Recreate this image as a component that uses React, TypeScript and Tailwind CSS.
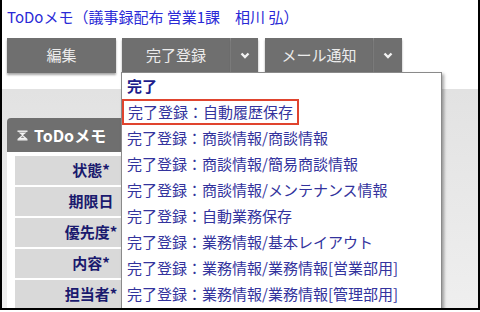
import React from 'react';

const labels = ['状態*', '期限日', '優先度*', '内容*', '担当者*'];

const items = [
  '完了登録：商談情報/商談情報',
  '完了登録：商談情報/簡易商談情報',
  '完了登録：商談情報/メンテナンス情報',
  '完了登録：自動業務保存',
  '完了登録：業務情報/基本レイアウト',
  '完了登録：業務情報/業務情報[営業部用]',
  '完了登録：業務情報/業務情報[管理部用]',
];

const Caret = () => (
  <svg width="10" height="7" viewBox="0 0 10 7">
    <path d="M1.5 1.5 L5 5 L8.5 1.5" fill="none" stroke="#f2f2f2" strokeWidth="2.4" />
  </svg>
);

const Hourglass = () => (
  <svg width="11" height="11" viewBox="0 0 11 11">
    <rect x="0.5" y="0.5" width="10" height="1.4" fill="#f4f4f4" />
    <path d="M1.5 2.6 L9.5 2.6 L5.5 5.5 Z" fill="#f4f4f4" />
    <path d="M5.5 5.5 L9 8.4 L2 8.4 Z" fill="none" stroke="#f4f4f4" strokeWidth="1.1" />
    <rect x="0.5" y="9.1" width="10" height="1.4" fill="#f4f4f4" />
  </svg>
);

const btn =
  'h-[35px] bg-[#6f6f6f] text-[#ececec] text-[15px] flex items-center justify-center shadow-[0_2px_2px_rgba(0,0,0,0.35)]';

export default function App() {
  return (
    <div className="w-[480px] h-[312px] bg-white overflow-hidden" style={{ fontFamily: '"Noto Sans CJK JP", "Noto Sans", sans-serif' }}>
      <div className="relative h-[310px] border-x-2 border-b-2 border-black overflow-hidden">
        <div className="pl-[5px] pt-[6px] text-[15px] leading-[22px] text-[#2a2ad6] whitespace-nowrap">
          ToDoメモ（議事録配布 営業1課　相川 弘）
        </div>

        <div className="mt-[10px] ml-[5px] flex">
          <div className={`${btn} w-[109px]`}>編集</div>
          <div className={`${btn} w-[109px] ml-[6px] border-r border-[#8a8a8a]`}>完了登録</div>
          <div className={`${btn} w-[27px]`}><Caret /></div>
          <div className={`${btn} w-[109px] ml-[7px] border-r border-[#8a8a8a]`}>メール通知</div>
          <div className={`${btn} w-[28px]`}><Caret /></div>
        </div>

        <div className="h-[16px]" />

        <div className="bg-gradient-to-b from-[#e2e2e2] to-[#f4f4f4] pt-[29px] pl-[5px] h-full">
          <div className="w-[420px]">
            <div className="h-[34px] bg-[#6f6f6f] rounded-t-[4px] flex items-center pl-[10px] gap-[6px]">
              <Hourglass />
              <span className="text-white font-bold text-[16px]">ToDoメモ</span>
            </div>
            <div className="bg-white px-[8px] pt-[4px] flex flex-col gap-[2px]">
              {labels.map((l) => (
                <div key={l} className="h-[29px] w-[152px] bg-[#d9d9d9] flex items-center justify-center text-[15px] font-bold text-[#1a1a6e]">
                  {l}
                </div>
              ))}
            </div>
          </div>
        </div>

        <div className="absolute left-[119px] top-[72px] w-[321px] h-[260px] bg-white border border-[#8a8a8a] shadow-[2px_2px_3px_rgba(0,0,0,0.35)] text-[15px] text-[#33339d]">
          <div className="h-[26px] flex items-center px-[5px] font-bold text-[#1c1c8c]">完了</div>
          <div className="h-[26px] flex">
            <div className="h-[26px] flex items-center px-[4px] border-2 border-[#e0442e]">完了登録：自動履歴保存</div>
          </div>
          {items.map((t) => (
            <div key={t} className="h-[26px] flex items-center px-[5px] whitespace-nowrap">{t}</div>
          ))}
        </div>
      </div>
    </div>
  );
}
